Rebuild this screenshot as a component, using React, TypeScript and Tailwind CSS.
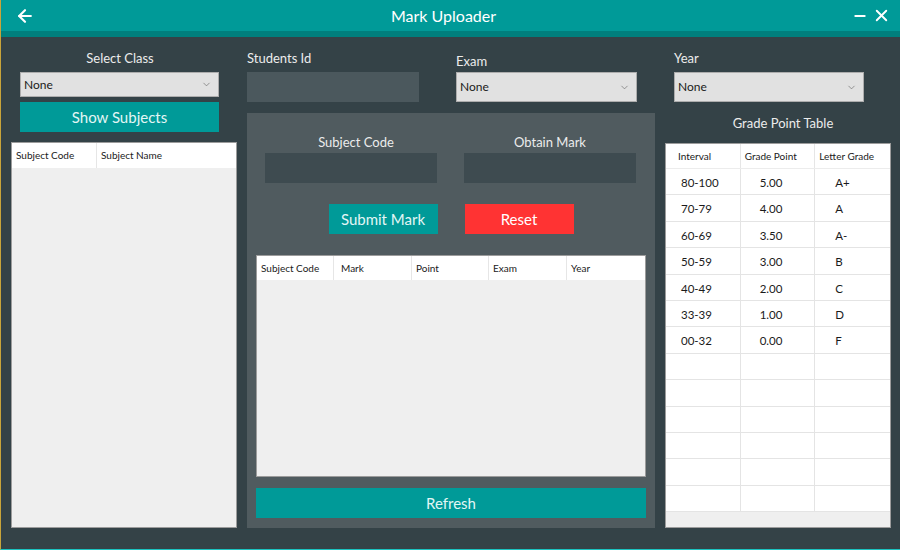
import { ArrowLeft, ChevronDown, Minus, X } from 'lucide-react';

const grades = [
  ['80-100', '5.00', 'A+'],
  ['70-79', '4.00', 'A'],
  ['60-69', '3.50', 'A-'],
  ['50-59', '3.00', 'B'],
  ['40-49', '2.00', 'C'],
  ['33-39', '1.00', 'D'],
  ['00-32', '0.00', 'F'],
  ['', '', ''],
  ['', '', ''],
  ['', '', ''],
  ['', '', ''],
  ['', '', ''],
  ['', '', ''],
];

function Combo({ className }: { className: string }) {
  return (
    <div
      className={`flex items-center justify-between bg-[#e1e1e1] border border-[#adadad] pl-[3px] pr-[6px] text-[12px] text-[#1a1a1a] ${className}`}
    >
      <span>None</span>
      <ChevronDown className="w-[11px] h-[11px] text-[#666]" strokeWidth={1.4} />
    </div>
  );
}

export default function App() {
  return (
    <div className="w-[900px] h-[550px] flex flex-col bg-[#344247] border-l border-l-[#c9a43a] border-b border-b-[#1bc3c0] font-['Lato','Open_Sans',sans-serif] overflow-hidden">
      {/* title bar */}
      <div className="h-[31px] bg-[#009a98] flex items-center text-white">
        <ArrowLeft className="ml-[14px] w-[20px] h-[20px]" strokeWidth={2.6} />
        <div className="flex-1 text-center text-[16px]">Mark Uploader</div>
        <Minus className="w-[16px] h-[16px]" strokeWidth={3} />
        <X className="ml-[4px] mr-[9px] w-[19px] h-[19px]" strokeWidth={2.4} />
      </div>
      <div className="h-[6px] bg-[#007f7d]" />

      <div className="flex-1 flex gap-[10px] pl-[10px] pr-[9px] pb-[21px]">
        {/* left column */}
        <div className="w-[226px] flex flex-col">
          <div className="mt-[11px] h-[20px] leading-[20px] text-center pr-[8px] text-[13px] text-[#ececec]">Select Class</div>
          <Combo className="mt-[4px] ml-[9px] w-[199px] h-[25px]" />
          <button className="mt-[5px] ml-[9px] w-[199px] h-[30px] bg-[#009a98] text-[15px] text-[#e3f6f5]">
            Show Subjects
          </button>
          <div className="mt-[10px] flex-1 flex flex-col border border-[#9c9c9c] bg-[#efefef]">
            <div className="h-[25px] flex bg-white text-[10px] text-[#1a1a1a]">
              <div className="w-[85px] flex items-center pl-[4px] border-r border-[#e6e6e6]">Subject Code</div>
              <div className="flex-1 flex items-center pl-[4px]">Subject Name</div>
            </div>
          </div>
        </div>

        {/* middle column */}
        <div className="w-[408px] flex flex-col">
          <div className="flex">
            <div className="w-[172px] flex flex-col">
              <div className="mt-[11px] h-[20px] leading-[20px] text-[13px] text-[#ececec]">Students Id</div>
              <div className="mt-[4px] h-[30px] bg-[#4b585d]" />
            </div>
            <div className="ml-[37px] w-[181px] flex flex-col">
              <div className="mt-[14px] h-[20px] leading-[20px] text-[13px] text-[#ececec]">Exam</div>
              <Combo className="mt-[1px] w-[181px] h-[30px]" />
            </div>
          </div>

          <div className="mt-[11px] flex-1 flex flex-col bg-[#505b5f] px-[9px] pb-[10px]">
            <div className="flex gap-[27px] px-[9px]">
              <div className="w-[172px] flex flex-col">
                <div className="mt-[19px] h-[20px] leading-[20px] text-center pl-[10px] text-[13px] text-[#ececec]">Subject Code</div>
                <div className="mt-[1px] h-[30px] bg-[#3e4b50]" />
              </div>
              <div className="w-[172px] flex flex-col">
                <div className="mt-[19px] h-[20px] leading-[20px] text-center text-[13px] text-[#ececec]">Obtain Mark</div>
                <div className="mt-[1px] h-[30px] bg-[#3e4b50]" />
              </div>
            </div>
            <div className="mt-[21px] flex justify-center gap-[27px]">
              <button className="w-[109px] h-[30px] bg-[#009a98] text-[15px] text-[#e3f6f5]">Submit Mark</button>
              <button className="w-[109px] h-[30px] bg-[#ff3333] text-[15px] text-white">Reset</button>
            </div>
            <div className="mt-[21px] h-[222px] flex flex-col border border-[#9c9c9c] bg-[#efefef]">
              <div className="h-[24px] grid grid-cols-[77px_78px_77px_78px_1fr] bg-white text-[10px] text-[#1a1a1a]">
                <div className="flex items-center pl-[4px] border-r border-[#e6e6e6]">Subject Code</div>
                <div className="flex items-center pl-[7px] border-r border-[#e6e6e6]">Mark</div>
                <div className="flex items-center pl-[4px] border-r border-[#e6e6e6]">Point</div>
                <div className="flex items-center pl-[4px] border-r border-[#e6e6e6]">Exam</div>
                <div className="flex items-center pl-[4px]">Year</div>
              </div>
            </div>
            <button className="mt-[11px] h-[30px] bg-[#009a98] text-[15px] text-[#e3f6f5]">Refresh</button>
          </div>
        </div>

        {/* right column */}
        <div className="w-[226px] flex flex-col">
          <div className="ml-[9px] mt-[11px] h-[20px] leading-[20px] text-[13px] text-[#ececec]">Year</div>
          <Combo className="mt-[4px] ml-[9px] w-[190px] h-[30px]" />
          <div className="mt-[11px] h-[20px] leading-[20px] text-center pl-[10px] text-[13px] text-[#ececec]">Grade Point Table</div>
          <div className="mt-[10px] flex-1 flex flex-col border border-[#9c9c9c] bg-[#efefef]">
            <div className="h-[25px] grid grid-cols-3 bg-white text-[10px] text-[#1a1a1a] border-b border-[#ececec]">
              <div className="flex items-center pl-[12px] border-r border-[#e6e6e6]">Interval</div>
              <div className="flex items-center pl-[4px] border-r border-[#e6e6e6]">Grade Point</div>
              <div className="flex items-center pl-[4px]">Letter Grade</div>
            </div>
            {grades.map((g, i) => (
              <div key={i} className="h-[26.4px] grid grid-cols-3 bg-white text-[11.5px] text-[#1a1a1a] border-b border-[#e4e4e4]">
                <div className="flex items-center pt-[2px] pl-[15px] border-r border-[#e4e4e4]">{g[0]}</div>
                <div className="flex items-center pt-[2px] pl-[19px] border-r border-[#e4e4e4]">{g[1]}</div>
                <div className="flex items-center pt-[2px] pl-[20px]">{g[2]}</div>
              </div>
            ))}
          </div>
        </div>
      </div>
    </div>
  );
}
